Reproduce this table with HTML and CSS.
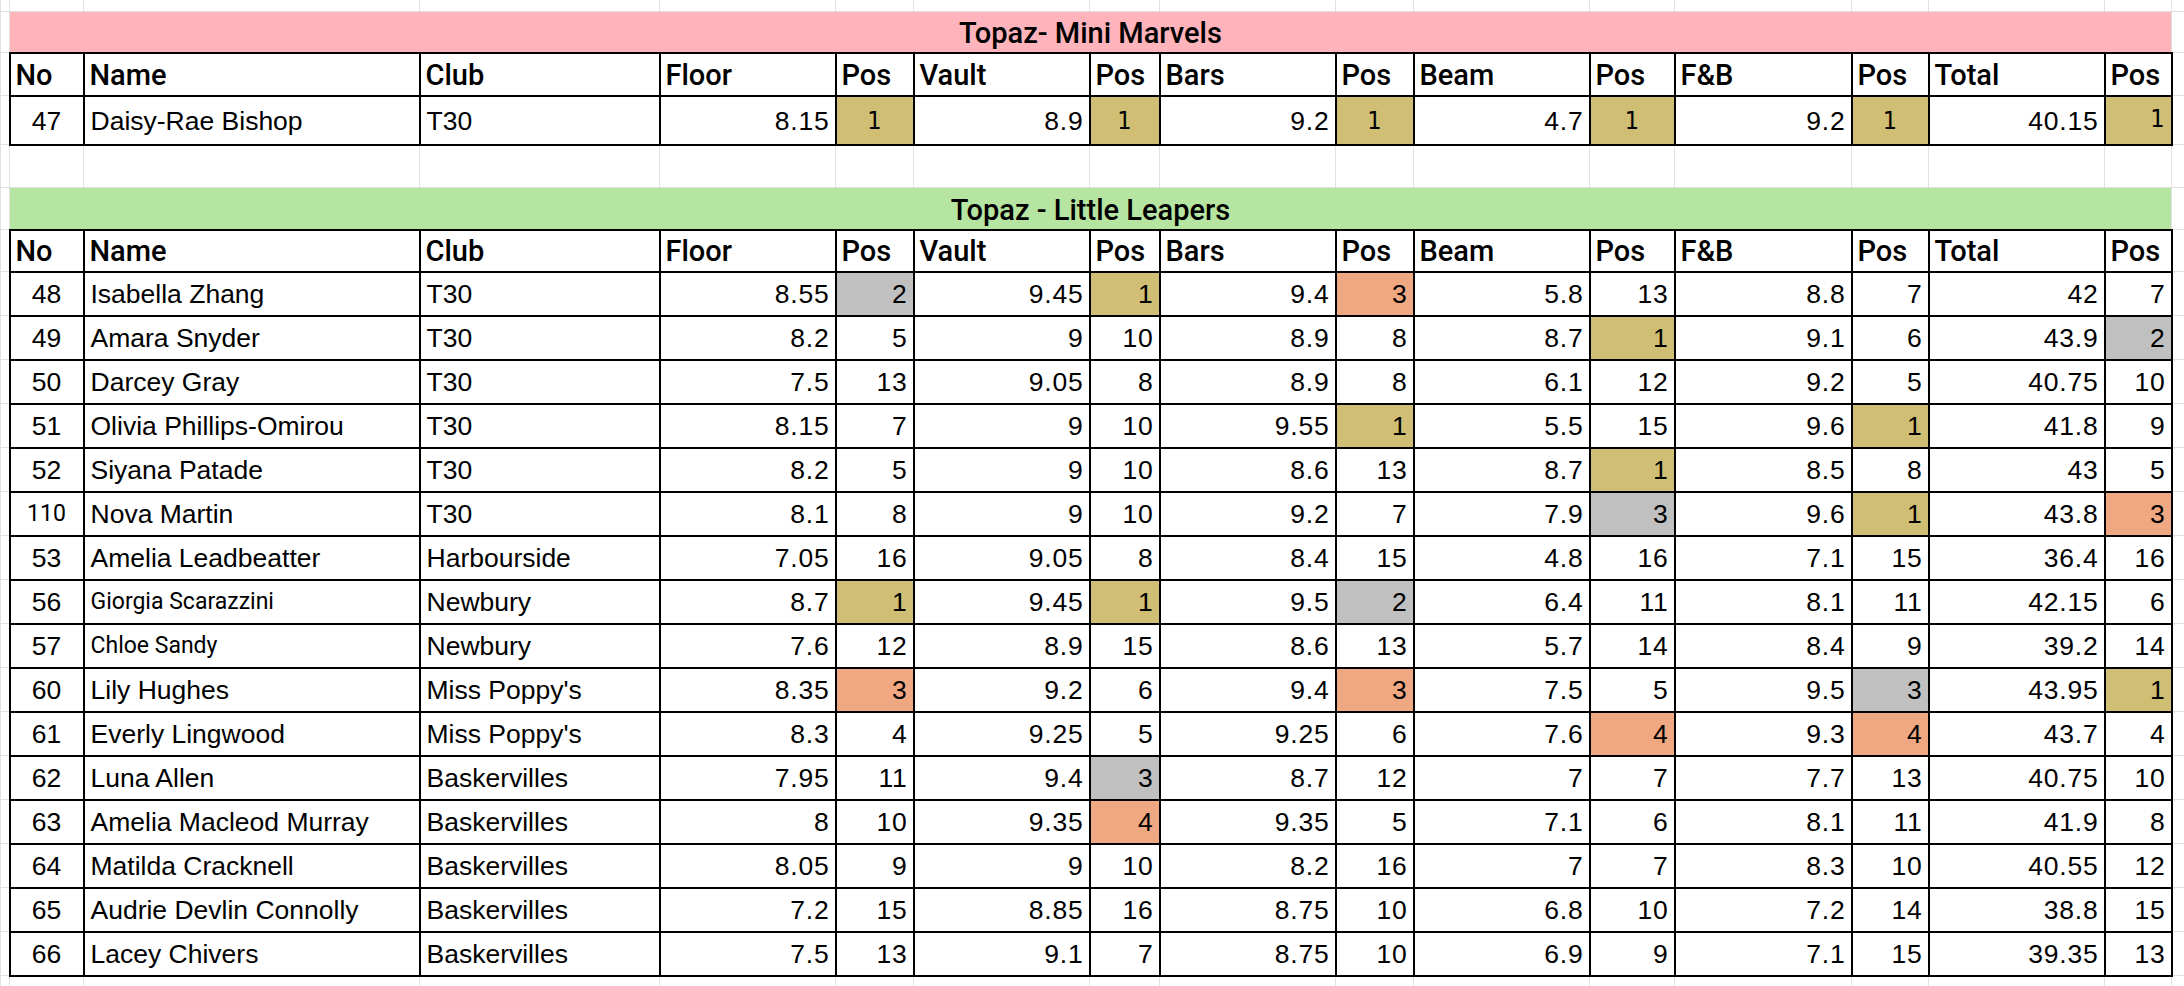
FILE: index.html
```html
<!DOCTYPE html>
<html>
<head>
<meta charset="utf-8">
<title>Topaz results</title>
<link rel="stylesheet" href="styles.css">
</head>
<body>
<table class="sheet">
<colgroup>
<col class="w-a"><col class="w-no"><col class="w-name"><col class="w-club">
<col class="w-sc"><col class="w-p1"><col class="w-sc"><col class="w-p2"><col class="w-sc"><col class="w-p3">
<col class="w-sc"><col class="w-p4"><col class="w-fb"><col class="w-p5"><col class="w-sc"><col class="w-p6"><col class="w-z">
</colgroup>
<tbody>
<tr class="r-top"><td class="g"></td><td class="g"></td><td class="g"></td><td class="g"></td><td class="g"></td><td class="g"></td><td class="g"></td><td class="g"></td><td class="g"></td><td class="g"></td><td class="g"></td><td class="g"></td><td class="g"></td><td class="g"></td><td class="g"></td><td class="g"></td><td class="g"></td></tr>
<tr class="r-title"><td class="g"></td><td class="title pink" colspan="15">Topaz- Mini Marvels</td><td class="g"></td></tr>
<tr class="r-head"><td class="g"></td><td class="c h">No</td><td class="c h">Name</td><td class="c h">Club</td><td class="c h">Floor</td><td class="c h">Pos</td><td class="c h">Vault</td><td class="c h">Pos</td><td class="c h">Bars</td><td class="c h">Pos</td><td class="c h">Beam</td><td class="c h">Pos</td><td class="c h">F&amp;B</td><td class="c h">Pos</td><td class="c h">Total</td><td class="c h">Pos</td><td class="g"></td></tr>
<tr class="r-mini"><td class="g"></td><td class="c ctr">47</td><td class="c">Daisy-Rae Bishop</td><td class="c">T30</td><td class="c num">8.15</td><td class="c ctr gold alt">1</td><td class="c num">8.9</td><td class="c ctr gold alt">1</td><td class="c num">9.2</td><td class="c ctr gold alt">1</td><td class="c num">4.7</td><td class="c ctr gold alt">1</td><td class="c num">9.2</td><td class="c ctr gold alt">1</td><td class="c num">40.15</td><td class="c num gold alt raised">1</td><td class="g"></td></tr>
<tr class="r-gap"><td class="g"></td><td class="g"></td><td class="g"></td><td class="g"></td><td class="g"></td><td class="g"></td><td class="g"></td><td class="g"></td><td class="g"></td><td class="g"></td><td class="g"></td><td class="g"></td><td class="g"></td><td class="g"></td><td class="g"></td><td class="g"></td><td class="g"></td></tr>
<tr class="r-title2"><td class="g"></td><td class="title green" colspan="15">Topaz - Little Leapers</td><td class="g"></td></tr>
<tr class="r-head2"><td class="g"></td><td class="c h">No</td><td class="c h">Name</td><td class="c h">Club</td><td class="c h">Floor</td><td class="c h">Pos</td><td class="c h">Vault</td><td class="c h">Pos</td><td class="c h">Bars</td><td class="c h">Pos</td><td class="c h">Beam</td><td class="c h">Pos</td><td class="c h">F&amp;B</td><td class="c h">Pos</td><td class="c h">Total</td><td class="c h">Pos</td><td class="g"></td></tr>
<tr class="r-row"><td class="g"></td><td class="c ctr">48</td><td class="c">Isabella Zhang</td><td class="c">T30</td><td class="c num">8.55</td><td class="c num silver">2</td><td class="c num">9.45</td><td class="c num gold">1</td><td class="c num">9.4</td><td class="c num bronze">3</td><td class="c num">5.8</td><td class="c num">13</td><td class="c num">8.8</td><td class="c num">7</td><td class="c num">42</td><td class="c num">7</td><td class="g"></td></tr>
<tr class="r-row"><td class="g"></td><td class="c ctr">49</td><td class="c">Amara Snyder</td><td class="c">T30</td><td class="c num">8.2</td><td class="c num">5</td><td class="c num">9</td><td class="c num">10</td><td class="c num">8.9</td><td class="c num">8</td><td class="c num">8.7</td><td class="c num gold">1</td><td class="c num">9.1</td><td class="c num">6</td><td class="c num">43.9</td><td class="c num silver">2</td><td class="g"></td></tr>
<tr class="r-row"><td class="g"></td><td class="c ctr">50</td><td class="c">Darcey Gray</td><td class="c">T30</td><td class="c num">7.5</td><td class="c num">13</td><td class="c num">9.05</td><td class="c num">8</td><td class="c num">8.9</td><td class="c num">8</td><td class="c num">6.1</td><td class="c num">12</td><td class="c num">9.2</td><td class="c num">5</td><td class="c num">40.75</td><td class="c num">10</td><td class="g"></td></tr>
<tr class="r-row"><td class="g"></td><td class="c ctr">51</td><td class="c">Olivia Phillips-Omirou</td><td class="c">T30</td><td class="c num">8.15</td><td class="c num">7</td><td class="c num">9</td><td class="c num">10</td><td class="c num">9.55</td><td class="c num gold">1</td><td class="c num">5.5</td><td class="c num">15</td><td class="c num">9.6</td><td class="c num gold">1</td><td class="c num">41.8</td><td class="c num">9</td><td class="g"></td></tr>
<tr class="r-row"><td class="g"></td><td class="c ctr">52</td><td class="c">Siyana Patade</td><td class="c">T30</td><td class="c num">8.2</td><td class="c num">5</td><td class="c num">9</td><td class="c num">10</td><td class="c num">8.6</td><td class="c num">13</td><td class="c num">8.7</td><td class="c num gold">1</td><td class="c num">8.5</td><td class="c num">8</td><td class="c num">43</td><td class="c num">5</td><td class="g"></td></tr>
<tr class="r-row"><td class="g"></td><td class="c ctr sm">110</td><td class="c">Nova Martin</td><td class="c">T30</td><td class="c num">8.1</td><td class="c num">8</td><td class="c num">9</td><td class="c num">10</td><td class="c num">9.2</td><td class="c num">7</td><td class="c num">7.9</td><td class="c num silver">3</td><td class="c num">9.6</td><td class="c num gold">1</td><td class="c num">43.8</td><td class="c num bronze">3</td><td class="g"></td></tr>
<tr class="r-row"><td class="g"></td><td class="c ctr">53</td><td class="c">Amelia Leadbeatter</td><td class="c">Harbourside</td><td class="c num">7.05</td><td class="c num">16</td><td class="c num">9.05</td><td class="c num">8</td><td class="c num">8.4</td><td class="c num">15</td><td class="c num">4.8</td><td class="c num">16</td><td class="c num">7.1</td><td class="c num">15</td><td class="c num">36.4</td><td class="c num">16</td><td class="g"></td></tr>
<tr class="r-row"><td class="g"></td><td class="c ctr">56</td><td class="c sm">Giorgia Scarazzini</td><td class="c">Newbury</td><td class="c num">8.7</td><td class="c num gold">1</td><td class="c num">9.45</td><td class="c num gold">1</td><td class="c num">9.5</td><td class="c num silver">2</td><td class="c num">6.4</td><td class="c num">11</td><td class="c num">8.1</td><td class="c num">11</td><td class="c num">42.15</td><td class="c num">6</td><td class="g"></td></tr>
<tr class="r-row"><td class="g"></td><td class="c ctr">57</td><td class="c sm">Chloe Sandy</td><td class="c">Newbury</td><td class="c num">7.6</td><td class="c num">12</td><td class="c num">8.9</td><td class="c num">15</td><td class="c num">8.6</td><td class="c num">13</td><td class="c num">5.7</td><td class="c num">14</td><td class="c num">8.4</td><td class="c num">9</td><td class="c num">39.2</td><td class="c num">14</td><td class="g"></td></tr>
<tr class="r-row"><td class="g"></td><td class="c ctr">60</td><td class="c">Lily Hughes</td><td class="c">Miss Poppy's</td><td class="c num">8.35</td><td class="c num bronze">3</td><td class="c num">9.2</td><td class="c num">6</td><td class="c num">9.4</td><td class="c num bronze">3</td><td class="c num">7.5</td><td class="c num">5</td><td class="c num">9.5</td><td class="c num silver">3</td><td class="c num">43.95</td><td class="c num gold">1</td><td class="g"></td></tr>
<tr class="r-row"><td class="g"></td><td class="c ctr">61</td><td class="c">Everly Lingwood</td><td class="c">Miss Poppy's</td><td class="c num">8.3</td><td class="c num">4</td><td class="c num">9.25</td><td class="c num">5</td><td class="c num">9.25</td><td class="c num">6</td><td class="c num">7.6</td><td class="c num bronze">4</td><td class="c num">9.3</td><td class="c num bronze">4</td><td class="c num">43.7</td><td class="c num">4</td><td class="g"></td></tr>
<tr class="r-row"><td class="g"></td><td class="c ctr">62</td><td class="c">Luna Allen</td><td class="c">Baskervilles</td><td class="c num">7.95</td><td class="c num">11</td><td class="c num">9.4</td><td class="c num silver">3</td><td class="c num">8.7</td><td class="c num">12</td><td class="c num">7</td><td class="c num">7</td><td class="c num">7.7</td><td class="c num">13</td><td class="c num">40.75</td><td class="c num">10</td><td class="g"></td></tr>
<tr class="r-row"><td class="g"></td><td class="c ctr">63</td><td class="c">Amelia Macleod Murray</td><td class="c">Baskervilles</td><td class="c num">8</td><td class="c num">10</td><td class="c num">9.35</td><td class="c num bronze">4</td><td class="c num">9.35</td><td class="c num">5</td><td class="c num">7.1</td><td class="c num">6</td><td class="c num">8.1</td><td class="c num">11</td><td class="c num">41.9</td><td class="c num">8</td><td class="g"></td></tr>
<tr class="r-row"><td class="g"></td><td class="c ctr">64</td><td class="c">Matilda Cracknell</td><td class="c">Baskervilles</td><td class="c num">8.05</td><td class="c num">9</td><td class="c num">9</td><td class="c num">10</td><td class="c num">8.2</td><td class="c num">16</td><td class="c num">7</td><td class="c num">7</td><td class="c num">8.3</td><td class="c num">10</td><td class="c num">40.55</td><td class="c num">12</td><td class="g"></td></tr>
<tr class="r-row"><td class="g"></td><td class="c ctr">65</td><td class="c">Audrie Devlin Connolly</td><td class="c">Baskervilles</td><td class="c num">7.2</td><td class="c num">15</td><td class="c num">8.85</td><td class="c num">16</td><td class="c num">8.75</td><td class="c num">10</td><td class="c num">6.8</td><td class="c num">10</td><td class="c num">7.2</td><td class="c num">14</td><td class="c num">38.8</td><td class="c num">15</td><td class="g"></td></tr>
<tr class="r-row"><td class="g"></td><td class="c ctr">66</td><td class="c">Lacey Chivers</td><td class="c">Baskervilles</td><td class="c num">7.5</td><td class="c num">13</td><td class="c num">9.1</td><td class="c num">7</td><td class="c num">8.75</td><td class="c num">10</td><td class="c num">6.9</td><td class="c num">9</td><td class="c num">7.1</td><td class="c num">15</td><td class="c num">39.35</td><td class="c num">13</td><td class="g"></td></tr>
<tr class="r-bot"><td class="g"></td><td class="g"></td><td class="g"></td><td class="g"></td><td class="g"></td><td class="g"></td><td class="g"></td><td class="g"></td><td class="g"></td><td class="g"></td><td class="g"></td><td class="g"></td><td class="g"></td><td class="g"></td><td class="g"></td><td class="g"></td><td class="g"></td></tr>
</tbody>
</table>
</body>
</html>
```
FILE: styles.css
```css
html, body {
  margin: 0;
  padding: 0;
  background: #ffffff;
  overflow: hidden;
}

.sheet {
  border-collapse: collapse;
  table-layout: fixed;
  width: 2184px;
  margin-top: -1px;
}

.w-a { width: 9px; }
.w-no { width: 74px; }
.w-name { width: 336px; }
.w-club { width: 240px; }
.w-sc { width: 176px; }
.w-fb { width: 177px; }
.w-p1 { width: 78px; }
.w-p2 { width: 70px; }
.w-p3 { width: 78px; }
.w-p4 { width: 85px; }
.w-p5 { width: 77px; }
.w-p6 { width: 67px; }
.w-z { width: 13px; }

.sheet td {
  padding: 0 6px 6px 6px;
  vertical-align: bottom;
  white-space: nowrap;
  overflow: hidden;
  font-family: "Liberation Sans", Arial, sans-serif;
  font-size: 26.5px;
  line-height: 30px;
  color: #000;
}

.sheet td.g {
  border: 1px solid #e1e1e1;
  padding: 0;
}

.sheet td.c {
  border: 2px solid #000;
}

.r-top { height: 12px; }
.r-title { height: 41px; }
.r-head { height: 43px; }
.r-mini { height: 49px; }
.r-gap { height: 43px; }
.r-title2 { height: 42px; }
.r-head2 { height: 42px; }
.r-row { height: 44px; }
.r-bot { height: 30px; }

.sheet .r-mini td.c { padding-bottom: 8px; }

.sheet td.title {
  text-align: center;
  font-family: Roboto, "Liberation Sans", sans-serif;
  font-weight: 500;
  font-size: 29px;
  line-height: 32px;
  padding-bottom: 3px;
  border: 1px solid #e1e1e1;
}

.pink { background: #ffb3ba; }
.green { background: #b6e4a1; }

.sheet td.h {
  font-family: Roboto, "Liberation Sans", sans-serif;
  font-weight: 500;
  font-size: 29px;
  line-height: 32px;
  padding-left: 5px;
  padding-bottom: 4px;
}

.num { text-align: right; }
.ctr { text-align: center; }

.sheet td.num {
  letter-spacing: 0.8px;
  padding-right: 5px;
}

.sheet td.sm {
  font-family: Roboto, "Liberation Sans", sans-serif;
  font-size: 23px;
}

.sheet td.alt {
  font-family: "DejaVu Sans Condensed", "DejaVu Sans", sans-serif;
  font-size: 25px;
  letter-spacing: 0;
}

.gold { background: #cfbe73; }
.silver { background: #c0c0c0; }
.bronze { background: #f0a882; }

.sheet .r-mini td.raised { padding-bottom: 10px; padding-right: 6px; }
```
